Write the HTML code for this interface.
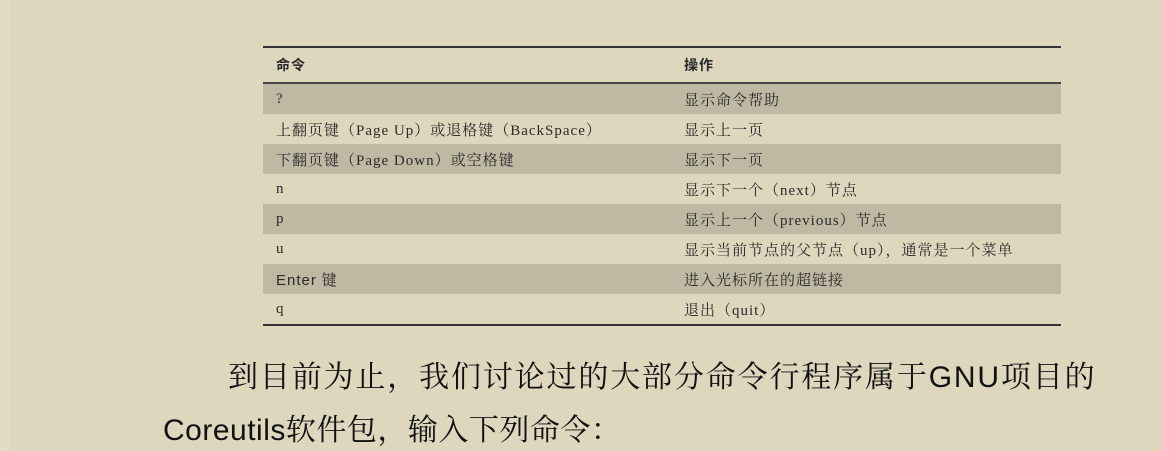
<!DOCTYPE html>
<html><head><meta charset="utf-8"><style>
body{margin:0;width:1162px;height:451px;background:#ded6bd;position:relative;overflow:hidden;font-family:"Liberation Serif","Noto Serif CJK SC",serif;color:#2a2a2a}
.strip{position:absolute;left:0;top:0;width:9px;height:451px;background:#e3dcc4}
table{position:absolute;left:263px;top:46px;width:798px;border-collapse:collapse;font-size:15px;letter-spacing:1px}
td{height:30px;padding:0 0 0 13px;vertical-align:middle}
td.c2{padding-left:0;width:377px}
tr.h td{height:34px;font-family:"Liberation Sans","Noto Sans CJK SC",sans-serif;font-weight:bold;font-size:14px;border-top:2.5px solid #333;border-bottom:2px solid #444}
tr.s td{background:#bfb8a3}
tr.last td{border-bottom:2px solid #333}
.p{position:absolute;white-space:nowrap;font-family:"Liberation Sans","Noto Serif CJK SC",serif;font-size:30px;color:#111}
</style></head><body><div class="strip"></div>
<table>
<tr class="h"><td>命令</td><td class="c2">操作</td></tr>
<tr class="s"><td>?</td><td class="c2">显示命令帮助</td></tr>
<tr><td>上翻页键（Page Up）或退格键（BackSpace）</td><td class="c2">显示上一页</td></tr>
<tr class="s"><td>下翻页键（Page Down）或空格键</td><td class="c2">显示下一页</td></tr>
<tr><td>n</td><td class="c2">显示下一个（next）节点</td></tr>
<tr class="s"><td>p</td><td class="c2">显示上一个（previous）节点</td></tr>
<tr><td>u</td><td class="c2">显示当前节点的父节点（up），通常是一个菜单</td></tr>
<tr class="s"><td><span style="font-family:'Liberation Sans','Noto Sans CJK SC',sans-serif">Enter</span> 键</td><td class="c2">进入光标所在的超链接</td></tr>
<tr class="last"><td>q</td><td class="c2">退出（quit）</td></tr>
</table>
<div class="p" style="left:228px;top:352px;letter-spacing:1.85px">到目前为止，我们讨论过的大部分命令行程序属于GNU项目的</div>
<div class="p" style="left:163px;top:405px;letter-spacing:0.5px">Coreutils软件包，输入下列命令：</div>
</body></html>
